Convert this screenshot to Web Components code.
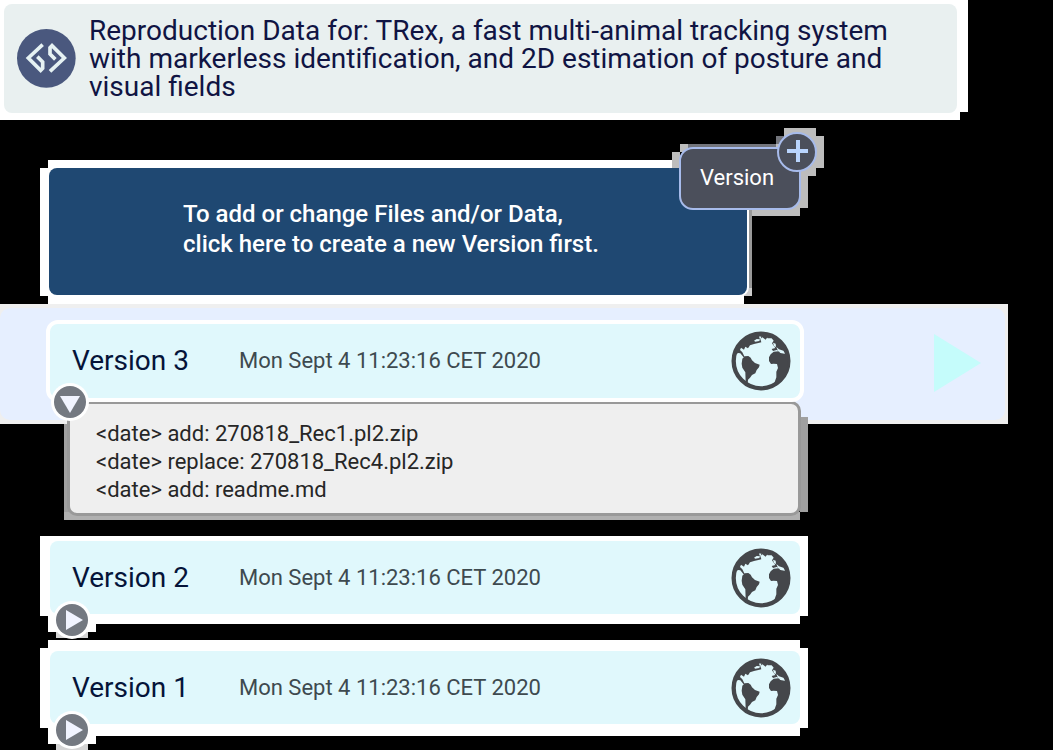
<!DOCTYPE html>
<html lang="en">
<head>
<meta charset="utf-8">
<title>Dataset versions</title>
<style>
  body { margin: 0; background: #000; font-family: Roboto, "Liberation Sans", sans-serif; }
</style>
</head>
<body>
<dataset-page></dataset-page>

<template id="t-page">
  <style>
    :host { display: block; }
    main { display: flex; flex-direction: column; gap: 16px; padding-bottom: 14px; }
    dataset-title { margin: 0 85px 24px 0; }
    new-version-banner { margin: 0 301px 0 40px; }
    .current { margin-top: -16px; }
    .row { margin: 0 245px 0 40px; }
  </style>
  <main>
    <dataset-title>Reproduction Data for: TRex, a fast multi-animal tracking system with markerless identification, and 2D estimation of posture and visual fields</dataset-title>
    <new-version-banner></new-version-banner>
    <current-version class="current">
      <version-card open>
        <span slot="name">Version 3</span>
        <span slot="date">Mon Sept 4 11:23:16 CET 2020</span>
      </version-card>
      <change-log slot="log"></change-log>
    </current-version>
    <version-card class="row" framed>
      <span slot="name">Version 2</span>
      <span slot="date">Mon Sept 4 11:23:16 CET 2020</span>
    </version-card>
    <version-card class="row" framed last>
      <span slot="name">Version 1</span>
      <span slot="date">Mon Sept 4 11:23:16 CET 2020</span>
    </version-card>
  </main>
</template>

<template id="t-title">
  <style>
    :host {
      display: block; padding: 4px 11px 7px 4px;
      background:
        linear-gradient(#fff, #fff) 0 0 / 100% calc(100% - 8px) no-repeat,
        linear-gradient(#fff, #fff) 0 100% / calc(100% - 8px) 8px no-repeat;
    }
    header {
      display: flex; align-items: center; gap: 13px; box-sizing: border-box;
      min-height: 109px; padding: 12px 13px; border-radius: 8px; background: #e9f0f0;
    }
    svg { flex: none; width: 59px; height: 59px; }
    h1 { margin: 0; font-weight: 400; font-size: 28px; line-height: 28px; color: #101443; }
  </style>
  <header>
    <svg viewBox="0 0 177 177" aria-hidden="true">
      <circle cx="88" cy="88" r="88" fill="#4a587e"/>
      <g fill="none" stroke="#e6f2f3" stroke-width="11" stroke-linejoin="miter">
        <path d="M77 47 L34 87 L71 124 L77 118 V99 L61 83"/>
        <path d="M77 47 L34 87 L71 124 L77 118 V99 L61 83" transform="rotate(180 88 87)"/>
      </g>
    </svg>
    <h1><slot></slot></h1>
  </header>
</template>

<template id="t-banner">
  <style>
    :host {
      display: block; position: relative; padding: 8px 5px 9px 9px;
      background:
        linear-gradient(#ccc, #ccc) 100% calc(100% - 8px) / 8px 8px no-repeat,
        linear-gradient(#999, #999) 100% 8px / 3px calc(100% - 16px) no-repeat,
        linear-gradient(#fff, #fff) 0 8px / 100% calc(100% - 16px) no-repeat,
        linear-gradient(#fff, #fff) 8px 0 / calc(100% - 16px) 100% no-repeat;
    }
    .hint {
      display: block; width: 100%; min-height: 127px; box-sizing: border-box; margin: 0;
      padding: 0 0 6px 134px; border: 0; border-radius: 8px; background: #1f4872; color: #fff;
      font: 500 24px/30px Roboto, "Liberation Sans", sans-serif; text-align: left; cursor: pointer;
      box-shadow: 0 0 0 2px #fff;
    }
    .add { position: absolute; top: -32px; right: -72px; width: 152px; height: 88px; }
    .add svg { position: absolute; inset: 0; width: 152px; height: 88px; }
    .add button {
      position: absolute; left: 7px; top: 19px; width: 122px; height: 63px; padding: 0 6px 2px 0;
      border: 2px solid #a7bbeb; border-radius: 14px; background: #4b4f5b; color: #fff;
      font: 400 22px/26px Roboto, "Liberation Sans", sans-serif; cursor: pointer;
    }
  </style>
  <button class="hint" type="button">To add or change Files and/or Data,<br>click here to create a new Version first.</button>
  <div class="add">
    <svg viewBox="0 0 152 88" aria-hidden="true" shape-rendering="crispEdges">
      <path fill="#bdbdbd" d="M112 0h32v8h8v32h-8v8h-8v32h-8v8H80V80h40V24H8v16H0V24h8v-8h96V8h8z"/>
      <path fill="#73757c" d="M16 16h88v5H16zM104 8h8v8h-8z"/>
    </svg>
    <button type="button">Version</button>
    <svg viewBox="0 0 152 88" aria-hidden="true" style="pointer-events:none">
      <circle cx="125" cy="24" r="19" fill="#4b4f5b" stroke="#a7bbeb" stroke-width="2"/>
      <path d="M126 12v22M115 23h21" stroke="#b9d4fd" stroke-width="4"/>
    </svg>
  </div>
</template>

<template id="t-current">
  <style>
    :host { display: block; position: relative; padding-top: 16px; }
    .band {
      position: absolute; top: 0; left: 0; right: 45px; height: 120px; box-sizing: border-box;
      padding: 4px 3px 4px 0; background: #efefef;
    }
    .fill {
      height: 100%; display: flex; align-items: center; justify-content: flex-end; box-sizing: border-box;
      padding: 0 24px 2px 0; background: #e6efff; border-radius: 10px;
    }
    .fill svg { width: 47px; height: 58px; }
    .card { position: relative; z-index: 1; margin: 0 249px 0 46px; }
    .log { position: relative; margin: -1px 245px 0 64px; }
  </style>
  <div class="band"><div class="fill">
    <svg viewBox="0 0 47 58" aria-hidden="true"><path d="M0 0 47 29 0 58z" fill="#c5fcfb"/></svg>
  </div></div>
  <div class="card"><slot></slot></div>
  <div class="log"><slot name="log"></slot></div>
</template>

<template id="t-log">
  <style>
    :host {
      display: block; padding: 0 7px 4px 3px;
      background:
        linear-gradient(#b0b0b0, #b0b0b0) 0 100% / calc(100% - 8px) 8px no-repeat,
        linear-gradient(#a0a0a0, #a0a0a0) 0 23px / 8px calc(100% - 31px) no-repeat,
        linear-gradient(#a0a0a0, #a0a0a0) 100% 16px / 8px calc(100% - 24px) no-repeat;
    }
    ul {
      list-style: none; margin: 0; padding: 16px 26px 9px; border: 3px solid #999; border-radius: 10px;
      background: #efefef; color: #262626; font-size: 22px; line-height: 28px;
    }
  </style>
  <ul>
    <li>&lt;date&gt; add: 270818_Rec1.pl2.zip</li>
    <li>&lt;date&gt; replace: 270818_Rec4.pl2.zip</li>
    <li>&lt;date&gt; add: readme.md</li>
  </ul>
</template>

<template id="t-card">
  <style>
    :host { display: block; position: relative; }
    :host([framed]) {
      padding: 5px 8px 10px 10px;
      background:
        linear-gradient(#fff, #fff) 0 0 / 100% calc(100% - 8px) no-repeat,
        linear-gradient(#fff, #fff) 8px 100% / calc(100% - 16px) 8px no-repeat;
    }
    :host([last]) {
      padding: 11px 8px 12px 10px;
      background:
        linear-gradient(#fff, #fff) 0 8px / 100% calc(100% - 16px) no-repeat,
        linear-gradient(#fff, #fff) 8px 0 / calc(100% - 16px) 100% no-repeat;
    }
    article {
      display: flex; align-items: center; box-sizing: border-box; min-height: 73px;
      padding: 0 9px 0 22px; border-radius: 8px; background: #e0f8fc;
    }
    :host([open]) article { min-height: 82px; border: 4px solid #fff; border-radius: 12px; }
    h2 { margin: 0; flex: 0 0 167px; font-weight: 400; font-size: 28px; line-height: 32px; color: #051439; }
    .date { flex: 1; font-size: 22px; line-height: 28px; color: #3e4a4f; }
    .globe { flex: none; width: 60px; height: 60px; }
    .toggle {
      position: absolute; left: 16px; bottom: -12px; width: 32px; height: 32px; padding: 0; border: 0;
      border-radius: 50%; background: #747981; box-shadow: 0 0 0 3px #fff; cursor: pointer;
    }
    :host([last]) .toggle { bottom: -10px; }
    :host([open]) .toggle { left: 8px; bottom: -16px; }
    .toggle svg { display: block; width: 32px; height: 32px; }
    :host([open]) .toggle svg { transform: rotate(90deg); }
    .step { display: none; position: absolute; left: 8px; top: 100%; width: 48px; height: 8px; background: #fff; }
    .step::after { content: ""; position: absolute; left: 8px; top: 8px; width: 32px; height: 6px; background: #d4d4d4; }
    :host([framed]) .step { display: block; }
  </style>
  <article>
    <h2><slot name="name"></slot></h2>
    <span class="date"><slot name="date"></slot></span>
    <svg class="globe" viewBox="17 18 180 180" role="img" aria-label="Public">
      <circle cx="107" cy="108" r="82" fill="none" stroke="#45474b" stroke-width="13"/>
      <g fill="#45474b">
        <path d="M34 86 Q38 42 85 26 L132 25 L137 38 L127 35 L121 44 L111 37 L105 42 L108 52 L99 54 L86 57 L74 61 L68 70 L60 65 L56 74 L47 68 L44 75 L51 82 L58 96 L54 96 L45 85 L39 84z"/>
        <path d="M51 101 L58 94 L69 93 L76 98 L80 106 L89 114 L103 119 L101 127 L94 135 L90 145 L80 150 L74 158 L68 164 L67 177 L61 171 L60 142 L51 128 L49 116z"/>
        <path d="M119 29 Q175 36 188 91 L187 122 Q182 160 151 183 L147 174 L153 157 L153 140 L158 129 L155 117 L145 116 L137 117 L131 108 L131 97 L136 88 L145 80 L160 79 L165 84 L178 86 L176 80 L163 79 L154 75 L143 78 L139 72 L150 69 L144 61 L140 55 L145 47 L139 40 L127 40z"/>
      </g>
      <g fill="#e0f8fc">
        <path d="M86 47 L94 42 L104 43 L102 48 L90 50z"/>
        <path d="M102 34 L108 35 L106 42 L102 40z"/>
        <path d="M143 53 L151 56 L152 66 L146 64z"/>
        <path d="M153 66 L161 73 L174 77 L179 86 L169 82 L158 78z"/>
      </g>
    </svg>
  </article>
  <span class="step"></span>
  <button class="toggle" type="button" aria-label="Show changes">
    <svg viewBox="0 0 32 32" aria-hidden="true"><path d="M10 6 27 16 10 26z" fill="#f1f4ff"/></svg>
  </button>
</template>

<script>
  function define(name, templateId, connected) {
    customElements.define(name, class extends HTMLElement {
      constructor() {
        super();
        this.attachShadow({ mode: "open" })
          .append(document.getElementById(templateId).content.cloneNode(true));
      }
      connectedCallback() { if (connected) connected(this); }
    });
  }
  define("dataset-title", "t-title");
  define("new-version-banner", "t-banner");
  define("current-version", "t-current");
  define("change-log", "t-log");
  define("version-card", "t-card", el => {
    el.shadowRoot.querySelector(".toggle").setAttribute("aria-expanded", el.hasAttribute("open"));
  });
  define("dataset-page", "t-page");
</script>
</body>
</html>
